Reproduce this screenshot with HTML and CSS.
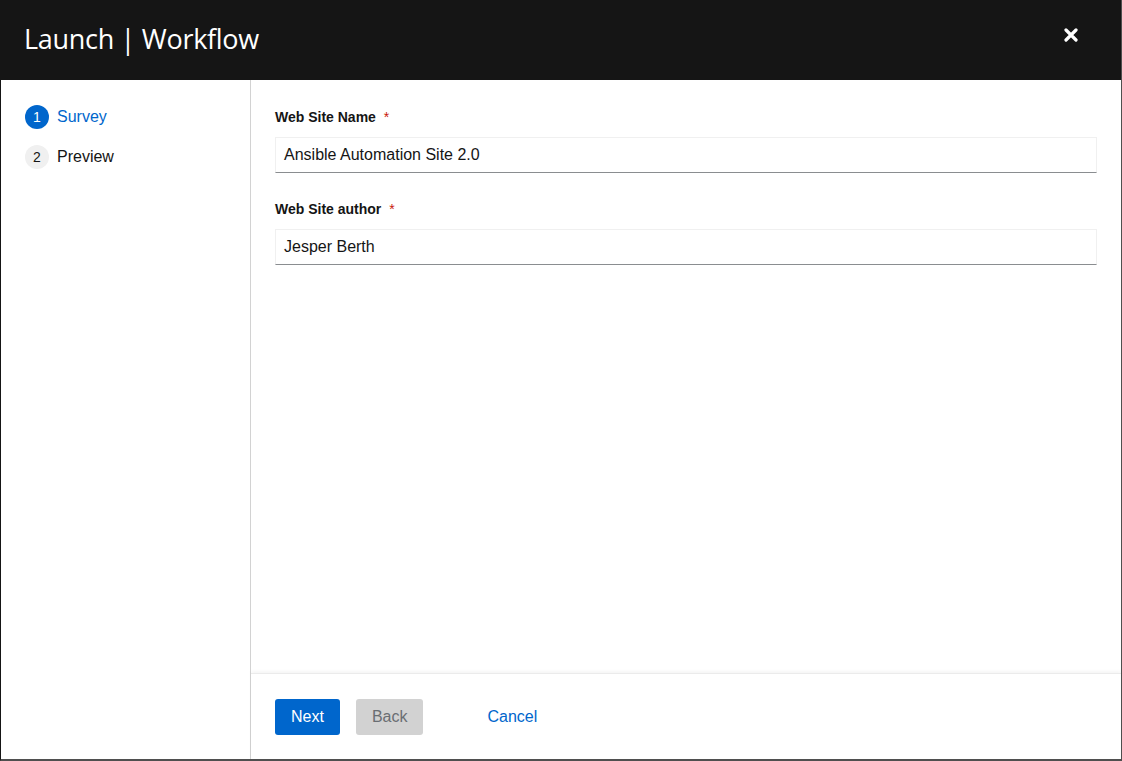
FILE: index.html
```html
<!DOCTYPE html>
<html lang="en">
<head>
<meta charset="utf-8">
<title>Launch | Workflow</title>
<link rel="stylesheet" href="styles.css">
</head>
<body>
<div class="modal">
  <header class="modal-header">
    <h1 class="modal-title">Launch | Workflow</h1>
    <button class="close-btn" aria-label="Close">
      <svg width="14" height="14" viewBox="0 0 14 14"><path d="M2 2 L12 12 M12 2 L2 12" stroke="#fff" stroke-width="3.2" stroke-linecap="round"/></svg>
    </button>
  </header>
  <div class="modal-body">
    <nav class="wizard-nav">
      <div class="step step-current"><span class="step-num">1</span><span class="step-label">Survey</span></div>
      <div class="step"><span class="step-num">2</span><span class="step-label">Preview</span></div>
    </nav>
    <section class="wizard-main">
      <div class="wizard-content">
        <div class="form-group">
          <label class="form-label">Web Site Name <span class="req">*</span></label>
          <div class="form-input">Ansible Automation Site 2.0</div>
        </div>
        <div class="form-group">
          <label class="form-label">Web Site author <span class="req">*</span></label>
          <div class="form-input">Jesper Berth</div>
        </div>
      </div>
      <footer class="wizard-footer">
        <button class="btn btn-primary">Next</button>
        <button class="btn btn-disabled">Back</button>
        <button class="btn btn-link">Cancel</button>
      </footer>
    </section>
  </div>
</div>
</body>
</html>
```
FILE: styles.css
```css
html, body {
  margin: 0;
  padding: 0;
  background: #4f5255;
}
body {
  font-family: "Liberation Sans", Arial, sans-serif;
  color: #151515;
}
.modal {
  width: 1122px;
  height: 761px;
  box-sizing: border-box;
  display: flex;
  flex-direction: column;
  background: #fff;
  border-left: 1px solid #151515;
  border-right: 1px solid #4f4f4f;
  border-bottom: 2px solid #4f4f4f;
}
.modal-header {
  height: 80px;
  flex: none;
  background: #151515;
  display: flex;
  align-items: center;
  justify-content: space-between;
  padding: 0 43px 0 24px;
  margin-left: -1px;
}
.modal-title {
  margin: 0;
  color: #fff;
  font-family: "Open Sans", sans-serif;
  font-weight: 500;
  font-size: 27px;
  letter-spacing: -0.3px;
  position: relative;
  top: -2px;
}
.close-btn {
  background: none;
  border: 0;
  padding: 0;
  width: 14px;
  height: 14px;
  display: flex;
  position: relative;
  top: -5px;
}
.modal-body {
  flex: 1;
  display: flex;
  min-height: 0;
}
.wizard-nav {
  width: 250px;
  box-sizing: border-box;
  flex: none;
  border-right: 1px solid #d2d2d2;
  padding: 25px 0 0 24px;
  display: flex;
  flex-direction: column;
  gap: 16px;
}
.step {
  display: flex;
  align-items: center;
  gap: 8px;
  height: 24px;
  font-size: 16px;
  color: #151515;
}
.step-num {
  width: 24px;
  height: 24px;
  border-radius: 50%;
  background: #f0f0f0;
  display: flex;
  align-items: center;
  justify-content: center;
  font-size: 14px;
  color: #151515;
}
.step-current .step-num {
  background: #0066cc;
  color: #fff;
}
.step-current .step-label {
  color: #0066cc;
}
.wizard-main {
  flex: 1;
  display: flex;
  flex-direction: column;
}
.wizard-content {
  flex: 1;
  padding: 27px 24px 0 24px;
  display: flex;
  flex-direction: column;
  gap: 26px;
}
.form-group {
  display: flex;
  flex-direction: column;
  gap: 9px;
}
.form-label {
  font-size: 14px;
  font-weight: 700;
  line-height: 21px;
}
.req {
  color: #c9190b;
  margin-left: 4px;
  font-weight: 400;
}
.form-input {
  height: 36px;
  box-sizing: border-box;
  border: 1px solid #f0f0f0;
  border-bottom-color: #8a8d90;
  padding: 0 8px;
  display: flex;
  align-items: center;
  font-size: 16px;
  color: #151515;
}
.wizard-footer {
  height: 86px;
  flex: none;
  box-sizing: border-box;
  border-top: 1px solid #ebebeb;
  box-shadow: 0 -2px 3px rgba(0,0,0,0.04);
  padding: 0 24px;
  display: flex;
  align-items: center;
  gap: 16px;
}
.btn {
  font-family: inherit;
  font-size: 16px;
  height: 36px;
  padding: 0 16px;
  border: 0;
  border-radius: 3px;
  background: none;
}
.btn-primary {
  background: #0066cc;
  color: #fff;
}
.btn-disabled {
  background: #d2d2d2;
  color: #6a6e73;
}
.btn-link {
  color: #0066cc;
  margin-left: 32px;
}
```
